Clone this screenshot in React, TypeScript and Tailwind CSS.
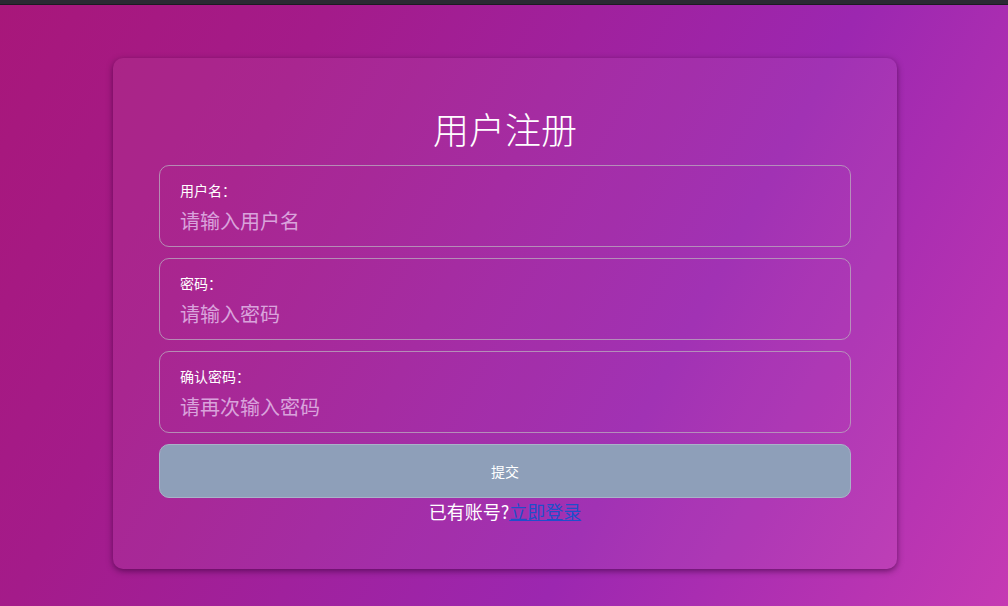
import React from 'react'

const font = {
  fontFamily: '"Noto Sans CJK SC", "Noto Sans", sans-serif',
}

function Field({ label, placeholder, type = 'text' }: { label: string; placeholder: string; type?: string }) {
  return (
    <div className="flex flex-col rounded-[10px] border border-[#b9a6bd]/80 px-5 pt-[14px] pb-[11px]">
      <label className="text-sm leading-5 text-white">{label}</label>
      <input
        type={type}
        placeholder={placeholder}
        className="mt-[7px] h-7 bg-transparent text-xl leading-7 text-white outline-none placeholder:text-[#d9a3dc]"
      />
    </div>
  )
}

export default function App() {
  return (
    <div
      className="min-h-screen w-full bg-[linear-gradient(118deg,#a8177a_0%,#a41b8a_25%,#9c27b0_65%,#c53ab3_100%)]"
      style={font}
    >
      <div className="h-[5px] bg-[#2b2a33] border-b border-[#1c1b22]" />
      {/* Register card */}
      <div className="ml-[113px] mt-[53px] w-[784px] rounded-[10px] bg-white/5 px-[46px] pt-[46px] pb-[46px] shadow-[0_2px_6px_rgba(60,0,60,0.65)]">
        <h1 className="text-center text-4xl font-light leading-[48px] text-white">用户注册</h1>
        <div className="mt-[13px] flex flex-col gap-[11px]">
          <Field label="用户名：" placeholder="请输入用户名" />
          <Field label="密码：" placeholder="请输入密码" type="password" />
          <Field label="确认密码：" placeholder="请再次输入密码" type="password" />
          <button className="h-[54px] rounded-[10px] border border-[#a9b3c8] bg-[#8e9fb9] text-sm text-white">
            提交
          </button>
        </div>
        <p className="mt-[1px] text-center text-lg leading-6 text-white">
          已有账号?<a href="#" className="text-[#1f4fcb] underline">立即登录</a>
        </p>
      </div>
    </div>
  )
}
